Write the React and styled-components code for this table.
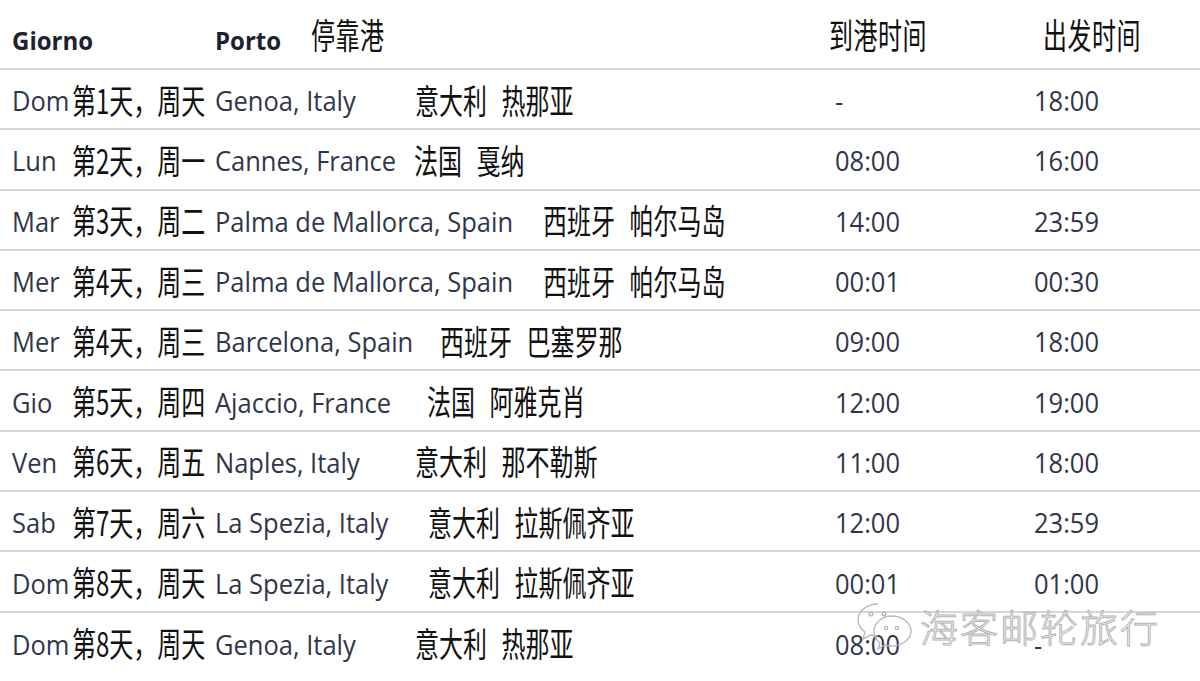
import React from "react";
import styled, { createGlobalStyle } from "styled-components";

const GlobalStyle = createGlobalStyle`
  html, body {
    margin: 0;
    padding: 0;
    background: #ffffff;
  }
  body {
    font-family: "Open Sans", "Noto Sans CJK SC", sans-serif;
  }
`;

//itinerary data: day abbreviation, chinese day, port, chinese port, arrival, departure
//nameWidth is where the chinese port name starts, measured from the port column
const stops = [
  { abbr: "Dom", day: "第1天，周天", port: "Genoa, Italy", cn: "意大利 热那亚", nameWidth: 200, arrive: "-", leave: "18:00" },
  { abbr: "Lun", day: "第2天，周一", port: "Cannes, France", cn: "法国 戛纳", nameWidth: 199, arrive: "08:00", leave: "16:00" },
  { abbr: "Mar", day: "第3天，周二", port: "Palma de Mallorca, Spain", cn: "西班牙 帕尔马岛", nameWidth: 328, arrive: "14:00", leave: "23:59" },
  { abbr: "Mer", day: "第4天，周三", port: "Palma de Mallorca, Spain", cn: "西班牙 帕尔马岛", nameWidth: 328, arrive: "00:01", leave: "00:30" },
  { abbr: "Mer", day: "第4天，周三", port: "Barcelona, Spain", cn: "西班牙 巴塞罗那", nameWidth: 225, arrive: "09:00", leave: "18:00" },
  { abbr: "Gio", day: "第5天，周四", port: "Ajaccio, France", cn: "法国 阿雅克肖", nameWidth: 212, arrive: "12:00", leave: "19:00" },
  { abbr: "Ven", day: "第6天，周五", port: "Naples, Italy", cn: "意大利 那不勒斯", nameWidth: 200, arrive: "11:00", leave: "18:00" },
  { abbr: "Sab", day: "第7天，周六", port: "La Spezia, Italy", cn: "意大利 拉斯佩齐亚", nameWidth: 213, arrive: "12:00", leave: "23:59" },
  { abbr: "Dom", day: "第8天，周天", port: "La Spezia, Italy", cn: "意大利 拉斯佩齐亚", nameWidth: 213, arrive: "00:01", leave: "01:00" },
  { abbr: "Dom", day: "第8天，周天", port: "Genoa, Italy", cn: "意大利 热那亚", nameWidth: 200, arrive: "08:00", leave: "-" },
];

//wechat style double bubble mark used by the watermark
const WeChatMark = () => (
  <svg width="58" height="50" viewBox="0 0 58 50" fill="none" stroke="#b9b9b9" strokeWidth="1.4">
    <path d="M22 3C11 3 2 10 2 19c0 5 3 9 7 12l-2 7 8-4c2 1 5 1 7 1" />
    <circle cx="15" cy="13" r="1.8" />
    <circle cx="28" cy="13" r="1.8" />
    <path d="M36 15c10 0 19 7 19 15s-9 15-19 15c-2 0-5 0-7-1l-7 4 2-6c-4-3-6-7-6-12 0-8 8-15 18-15z" />
    <circle cx="30" cy="27" r="1.6" />
    <circle cx="41" cy="27" r="1.6" />
  </svg>
);

const App = () => {
  return (
    <Page>
      <GlobalStyle />
      <Table>
        <HeaderRow>
          <HeadLatin>Giorno</HeadLatin>
          <PortHead>
            <HeadLatin>Porto</HeadLatin>
            <HeadCjk>停靠港</HeadCjk>
          </PortHead>
          <HeadCjk>到港时间</HeadCjk>
          <HeadCjk>出发时间</HeadCjk>
        </HeaderRow>
        {stops.map((stop, i) => (
          <Row key={i} $last={i === stops.length - 1}>
            <Latin>{stop.abbr}</Latin>
            <Cjk>{stop.day}</Cjk>
            <PortCell>
              <PortName $width={stop.nameWidth}>
                <Latin>{stop.port}</Latin>
              </PortName>
              <Cjk>{stop.cn}</Cjk>
            </PortCell>
            <Latin>{stop.arrive}</Latin>
            <Latin>{stop.leave}</Latin>
          </Row>
        ))}
      </Table>
      <Watermark>
        <WeChatMark />
        <WatermarkText>海客邮轮旅行</WatermarkText>
      </Watermark>
    </Page>
  );
};

export default App;

const Page = styled.div`
  position: relative;
  width: 1200px;
  height: 681px;
  overflow: hidden;
  background: #ffffff;
`;

const Table = styled.div`
  display: flex;
  flex-direction: column;
`;

const HeaderRow = styled.div`
  display: grid;
  grid-template-columns: 203px 614px 214px 1fr;
  align-items: center;
  padding-left: 12px;
  padding-top: 2px;
  border-bottom: 2px solid #d6d6d8;
  box-sizing: border-box;
  height: 70px;
`;

const PortHead = styled.div`
  display: flex;
  align-items: center;
  gap: 30px;
`;

const HeadLatin = styled.span`
  font-family: "Open Sans", sans-serif;
  font-weight: 700;
  font-size: 24px;
  color: #1d2130;
  display: inline-block;
  transform: translateY(5px) scaleY(1.05);
`;

const HeadCjk = styled.span`
  font-family: "Noto Sans CJK SC", sans-serif;
  font-size: 24px;
  color: #111111;
  display: inline-block;
  transform: translateY(-2px) scaleY(1.45);
  letter-spacing: 0.5px;
`;

const Row = styled.div`
  height: 60.3px;
  display: grid;
  grid-template-columns: 60px 143px 620px 199px 1fr;
  align-items: center;
  padding-left: 12px;
  box-sizing: border-box;
  border-bottom: ${({ $last }) => ($last ? "none" : "2px solid #d6d6d8")};
`;

const Latin = styled.span`
  font-family: "Open Sans", sans-serif;
  font-size: 25.5px;
  color: #30364a;
  white-space: nowrap;
  display: inline-block;
  transform: translateY(1px) scaleY(1.1);
`;

const Cjk = styled.span`
  font-family: "Noto Sans CJK SC", sans-serif;
  font-size: 24px;
  color: #111111;
  white-space: pre;
  word-spacing: 9px;
  display: inline-block;
  transform: scaleY(1.42);
`;

const PortCell = styled.div`
  display: flex;
  align-items: center;
`;

const PortName = styled.div`
  width: ${({ $width }) => `${$width}px`};
  flex: none;
`;

const Watermark = styled.div`
  position: absolute;
  left: 856px;
  top: 598px;
  display: flex;
  align-items: center;
  gap: 6px;
`;

const WatermarkText = styled.span`
  font-family: "Noto Sans CJK SC", sans-serif;
  font-size: 38px;
  font-weight: 300;
  color: rgba(255, 255, 255, 0.6);
  -webkit-text-stroke: 1px #b4b4b4;
  letter-spacing: 2px;
`;
